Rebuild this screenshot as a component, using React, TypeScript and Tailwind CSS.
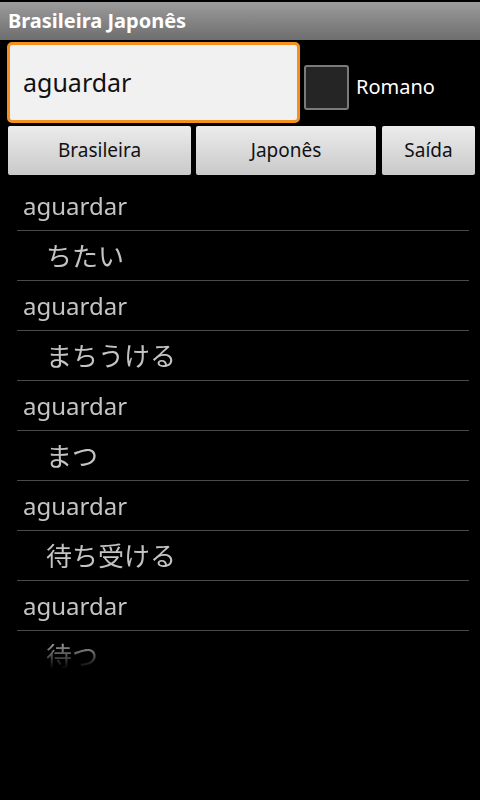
import React from 'react'

const font = { fontFamily: '"Noto Sans", "Open Sans", "Noto Sans CJK JP", sans-serif' }

type Entry = { pt: string; ja: string }

const entries: Entry[] = [
  { pt: 'aguardar', ja: 'ちたい' },
  { pt: 'aguardar', ja: 'まちうける' },
  { pt: 'aguardar', ja: 'まつ' },
  { pt: 'aguardar', ja: '待ち受ける' },
  { pt: 'aguardar', ja: '待つ' },
]

function Row({ text, indent }: { text: string; indent?: boolean }) {
  return (
    <div className="flex h-[50px] shrink-0 items-center border-b border-[#4a4a4a]">
      <span
        className={`leading-none text-[#c4c4c4] ${indent ? 'pl-[29px] text-[26px]' : 'pl-[6px] text-[24px]'}`}
      >
        {text}
      </span>
    </div>
  )
}

export default function App() {
  return (
    <div className="flex h-[800px] w-[480px] flex-col overflow-hidden bg-black" style={font}>
      <header className="mt-[2px] flex h-[38px] items-center bg-gradient-to-b from-[#9c9c9c] to-[#6e6e6e] px-[8px]">
        <h1 className="text-[20px] font-bold text-white">Brasileira Japonês</h1>
      </header>

      <div className="mt-[2px] flex h-[81px] items-center">
        <div className="ml-[7px] flex h-[81px] w-[293px] items-center rounded-[5px] border-[3px] border-[#f5901f] bg-[#f1f1f1] px-[13px]">
          <span className="text-[25px] text-[#111]">aguardar</span>
        </div>
        <div className="mt-[9px] ml-[4px] h-[45px] w-[45px] rounded-[3px] border-2 border-[#7a7a7a] bg-[#252525]" />
        <span className="mt-[8px] ml-[7px] text-[20px] text-white">Romano</span>
      </div>

      <div className="mt-[3px] flex h-[49px] pl-[8px]">
        <button className="w-[183px] rounded-[2px] bg-gradient-to-b from-[#ececec] to-[#c9c9c9] text-[19px] text-[#111]">
          Brasileira
        </button>
        <button className="ml-[5px] w-[180px] rounded-[2px] bg-gradient-to-b from-[#ececec] to-[#c9c9c9] text-[19px] text-[#111]">
          Japonês
        </button>
        <button className="ml-[6px] w-[93px] rounded-[2px] bg-gradient-to-b from-[#ececec] to-[#c9c9c9] text-[19px] text-[#111]">
          Saída
        </button>
      </div>

      <div className="mt-[6px] ml-[17px] mr-[11px] flex h-[488px] flex-col overflow-hidden [mask-image:linear-gradient(to_bottom,black_calc(100%-32px),transparent)]">
        {entries.map((e, i) => (
          <React.Fragment key={i}>
            <Row text={e.pt} />
            <Row text={e.ja} indent />
          </React.Fragment>
        ))}
      </div>
    </div>
  )
}
